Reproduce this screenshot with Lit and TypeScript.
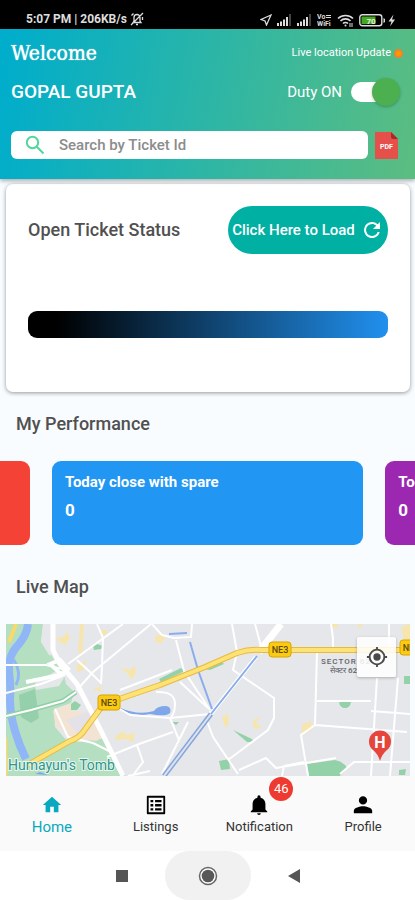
import { LitElement, html, css, svg } from "lit";
import { customElement, state } from "lit/decorators.js";
import { classMap } from "lit/directives/class-map.js";

/* Phone status bar: clock, network speed and system indicators. */
@customElement("status-bar")
class StatusBar extends LitElement {
  static styles = css`
    :host {
      display: flex;
      justify-content: space-between;
      align-items: flex-end;
      box-sizing: border-box;
      height: 29px;
      flex: none;
      padding: 0 18px 2px 26px;
      background: #000;
      color: #ddd;
      font-size: 12px;
      line-height: 16px;
      font-weight: 700;
    }
    .group {
      display: flex;
      align-items: center;
      gap: 3px;
    }
    .right {
      gap: 5px;
    }
    svg {
      display: block;
    }
  `;

  private signal() {
    return html`<svg width="15" height="12" viewBox="0 0 15 12" fill="#ddd">
      <path d="M0 9h2v3H0zM3 7.500h2V12H3zM6 5.500h2V12H6zM9 3h2v9H9z" />
      <path d="M12 0h2v12h-2z" fill="#444" />
    </svg>`;
  }

  render() {
    return html`
      <div class="group">
        <span>5:07 PM | 206KB/s</span>
        <svg width="14" height="14" viewBox="0 0 14 14" fill="none" stroke="#ddd" stroke-width="1.300">
          <path d="M3 10.500h8L10 9V5.500a3 3 0 0 0-6 0V9zM6 12.500h2M1 13L13 1M1.500 3.500l2-2M12.500 5v3" />
        </svg>
      </div>
      <div class="group right">
        <svg width="12" height="12" viewBox="0 0 12 12" fill="none" stroke="#ddd" stroke-width="1.300">
          <path d="M11 1L1 5.500l4 1.500 1.500 4z" />
        </svg>
        ${this.signal()} ${this.signal()}
        <svg width="15" height="14" viewBox="0 0 15 14" fill="#ddd" font-family="Roboto, sans-serif" font-weight="700" font-size="7">
          <text x="0" y="6">Vo</text>
          <text x="0" y="13">WiFi</text>
          <path d="M9 2h5v1H9zM9 4h5v1H9z" />
        </svg>
        <svg width="17" height="13" viewBox="0 0 17 13" fill="none" stroke="#ddd" stroke-width="1.600">
          <path d="M1 4.500a11 11 0 0 1 15 0M3.500 7a7 7 0 0 1 10 0M6 9.500a3.500 3.500 0 0 1 5 0" />
          <circle cx="8.500" cy="11.500" r="1" fill="#ddd" stroke="none" />
          <path d="M13 9v4M15 9v4" stroke-width="1" />
        </svg>
        <svg width="38" height="13" viewBox="0 0 38 13">
          <rect x="0.800" y="0.800" width="22" height="11" rx="2.500" fill="none" stroke="#ddd" stroke-width="1.400" />
          <rect x="2.500" y="2.500" width="14" height="7.600" fill="#46a81c" />
          <path d="M24.500 4v5l1.500-1V5z" fill="#ddd" />
          <text x="12" y="9.500" text-anchor="middle" font-family="Roboto, sans-serif" font-weight="700" font-size="8" fill="#eee">70</text>
          <path d="M34.500 0.500L29.500 7.500h3L31 12.500l5-7h-3z" fill="#ddd" />
        </svg>
      </div>
    `;
  }
}

/* Static street map with a locate button laid over it. */
@customElement("live-map")
class LiveMap extends LitElement {
  static styles = css`
    :host {
      display: block;
      position: relative;
      overflow: hidden;
      background: #e8eaed;
    }
    .canvas {
      display: block;
      width: 100%;
      height: 100%;
    }
    .locate {
      position: absolute;
      top: 13px;
      right: 14px;
      width: 39px;
      height: 40px;
      padding: 0;
      border: 0;
      border-radius: 2px;
      display: grid;
      place-items: center;
      background: rgba(255, 255, 255, 0.85);
      box-shadow: 0 1px 3px rgba(0, 0, 0, 0.25);
    }
  `;

  private shield(x: number, y: number) {
    return svg`
      <rect x=${x - 11} y=${y - 8} width="22" height="15" rx="3" fill="#fbcb14" stroke="#d9a400" stroke-width="1" />
      <text x=${x} y=${y + 3} text-anchor="middle" font-size="9" font-weight="500" fill="#5c4a10">NE3</text>`;
  }

  render() {
    return html`
      <svg class="canvas" viewBox="6 624 404 152" preserveAspectRatio="xMidYMid slice" font-family="Roboto, sans-serif" role="img" aria-label="Live map">
        <path d="M6 624H410V776H6z" fill="#e6e7eb" />
        <path d="M6 624H43L41 642 50 652 55 662 63 670 66 684 74 692 71 703 54 709 55 727 67 741 82 742 104 738 111 756 126 776H6z" fill="#b5dfc1" />
        <path d="M43 624h11l1 32-6-1-8-13zM35 683l21-12 8 7-5 8-23 4z" fill="#e6e7eb" />
        <path d="M53 711l18-8 4 8 15 2 14 24-8 4-24-4-16-11z" fill="#f3e3d3" />
        <path d="M66 720l22-8 8 12-17 12z" fill="#e4e2e8" />
        <path d="M19 695l16-6 4 29-8 5-10-6z" fill="#96cfab" />
        <path d="M71 704l4-3 6 4-4 5h-6zM93 646l4-2 6 2-2 3-7 1zM159 679l22-11 4 3-24 11zM172 722h7l-3 3zM205 669l17-7 2 2-14 6zM233 730l19 9 2 3-7 0zM339 702h12q-1 6-6 6-5 0-6-6zM307 764l28-4q9 2 12 8l-7 8h-31zM219 761l10-2 1 10-9 1zM404 676h6v8h-6zM399 770l7-1-1 6h-6z" fill="#93d1a8" />
        <path d="M56 638l8-1 3-6 3 7-4 5 3 3-10-4zM80 624h4l-2 30-4-2zM100 630h8l-2 5-6-1zM120 667l10 3 5-5 1 8-5 7-3-6zM77 665l10-5-4 10-6 2zM93 689l8-3v6zM155 637l6-3 4 4-4 6-6-3zM115 736l9-5 2 4 9-2-2 9-7-3-10 1zM222 717l6-3 1 10-4 4zM253 720l7-3-4 6 6 5-8 1zM303 724l8-3 1 9-6 3-5-1zM331 624h8l-4 5zM357 624h5l-2 5zM401 627l9-3v20l-6-4z" fill="#f6e6ae" />
        <path d="M28 624q-1 10-9 20-11 11-10 27 2 17 1 28 0 15 5 32 4 14 11 28" fill="none" stroke="#91b6f7" stroke-width="8" />
        <path d="M14 660q8 13 2 25" fill="none" stroke="#91b6f7" stroke-width="3" />
        <path d="M118 707q20 9 36 4 3-5 12-5 6 1 4 7-4 4-20 1-18 4-32-7M35 774l5-2 8 3z" fill="#7fa6ea" />

        <g fill="none" stroke="#fff" stroke-width="2" stroke-linejoin="round">
          <path d="M6 665H46l16 4M6 693l35-9 24-9M68 664l55-40M77 690l16-18 58-48" />
          <path d="M77 660l12 11 12 12M97 624l6 14-1 28-1 18M55 709l13 28 25 6 16 8" />
          <path d="M128 776l22-5M107 757l32-13 34-12M137 745l6 17-9 12M118 708l12 7 40 3 40-4 0-3M170 718l9 22M156 692q19-1 19 12 0 9-4 13" />
          <path d="M120 690l52-20M152 624l10 11 12 3 17-1 1-13M176 640l8 31 26 39M180 682l28 26M188 722l-26 52" />
          <path d="M232 624l5 28-4 18 41 28v20l-6 12-40 30M255 624l7 26M207 721l6 16 25 37" />
          <path d="M331 624l2 14v12M317 652l-2 73-14 10 7 41M317 701h54M315 725l92 7M371 711l39 3M377 678l-6 98M398 678l-8 98M389 624v26M239 770l27-12 10 10 60-10M282 776l2-10 20-4M340 774l14-12h56" />
        </g>
        <path d="M6 716l25-6 32-9 13-9" fill="none" stroke="#8fcfa5" stroke-width="5" />
        <path d="M6 716l25-6 32-9 13-9" fill="none" stroke="#fff" stroke-width="2" />
        <path d="M53 624v26l7 14 17 20 15 29 14 28 17 35" fill="none" stroke="#fff" stroke-width="5" />
        <path d="M26 682l39-8M50 664l10-4 8 9-7 5z" fill="none" stroke="#fff" stroke-width="4" />
        <path d="M281 624l-22 28" fill="none" stroke="#fff" stroke-width="7" />
        <path d="M256 657l-46 58-46 61" fill="none" stroke="#fff" stroke-width="4" />
        <path d="M257 656l-46 58M190 642l8 28 14 39M169 634l18-1" fill="none" stroke="#8badeb" stroke-width="2" />
        <path d="M211 714l-47 62" fill="none" stroke="#86a5dd" stroke-width="5" />
        <path d="M211 714l-47 62" fill="none" stroke="#dde3ea" stroke-width="2" />
        <path d="M16 624l-7 18" fill="none" stroke="#f8d969" stroke-width="4" />
        <path d="M6 738v38" fill="none" stroke="#f8d969" stroke-width="3" />
        <path d="M26 766l44-25q10-3 16-13l17-23 22-8 35-12 45-18 32-14q12-4 24-3H410" fill="none" stroke="#e9b93e" stroke-width="6" stroke-linejoin="round" />
        <path d="M26 766l44-25q10-3 16-13l17-23 22-8 35-12 45-18 32-14q12-4 24-3H410" fill="none" stroke="#fde276" stroke-width="4" stroke-linejoin="round" />

        ${this.shield(109, 703)} ${this.shield(280, 650)} ${this.shield(411, 648)}
        <g fill="#5f6368" font-size="8" font-weight="500">
          <text x="321" y="664" letter-spacing="1">SECTOR 62</text>
          <text x="330" y="673">सेक्टर 62</text>
        </g>
        <text x="8" y="770" font-size="14" fill="#2b968c" stroke="#eaf6ee" stroke-width="2" paint-order="stroke">Humayun's Tomb</text>
        <path d="M380 761q-2-7-7-11a11 11 0 1 1 14 0q-5 4-7 11z" fill="#e5453b" />
        <text x="380" y="748" text-anchor="middle" font-size="16" font-weight="700" fill="#fff">H</text>
      </svg>
      <button class="locate" aria-label="My location">
        <svg width="22" height="22" viewBox="0 0 24 24" fill="#4a4a4a">
          <path d="M12 8a4 4 0 1 0 0 8 4 4 0 0 0 0-8zm8.940 3A8.990 8.990 0 0 0 13 3.060V1h-2v2.060A8.990 8.990 0 0 0 3.060 11H1v2h2.060A8.990 8.990 0 0 0 11 20.940V23h2v-2.060A8.990 8.990 0 0 0 20.940 13H23v-2h-2.060zM12 19a7 7 0 1 1 0-14 7 7 0 0 1 0 14z" />
        </svg>
      </button>
    `;
  }
}

const TABS = [
  { label: "Home", icon: svg`<path d="M10 20v-6h4v6h5v-8h3L12 3 2 12h3v8z" />` },
  {
    label: "Listings",
    icon: svg`<path d="M21 2H3a1 1 0 0 0-1 1v18a1 1 0 0 0 1 1h18a1 1 0 0 0 1-1V3a1 1 0 0 0-1-1zm-1 18H4V4h16zM6 6.500h3v2.500H6zm5 0h7v2.500h-7zM6 11h3v2.500H6zm5 0h7v2.500h-7zM6 15.500h3V18H6zm5 0h7V18h-7z" />`,
  },
  {
    label: "Notification",
    badge: "46",
    icon: svg`<path d="M12 23a2 2 0 0 0 2-2h-4a2 2 0 0 0 2 2zm7-6v-6c0-3.400-2-6.100-5.300-6.900V3a1.700 1.700 0 0 0-3.400 0v1.100C7 4.900 5 7.600 5 11v6l-2 2v1h18v-1z" />`,
  },
  {
    label: "Profile",
    icon: svg`<path d="M12 11.500a4.500 4.500 0 1 0 0-9 4.500 4.500 0 0 0 0 9zm0 1.800c-3.500 0-10 1.700-10 5V21h20v-2.700c0-3.300-6.500-5-10-5z" />`,
  },
];

/* Bottom tabs of the app. */
@customElement("tab-bar")
class TabBar extends LitElement {
  @state() private active = "Home";

  static styles = css`
    :host {
      display: block;
      flex: none;
      background: #fafafa;
    }
    .tabs {
      display: grid;
      grid-template-columns: repeat(4, 1fr);
      height: 75px;
    }
    .tab {
      display: flex;
      flex-direction: column;
      align-items: center;
      gap: 3px;
      padding: 18px 0 0;
      border: 0;
      background: none;
      font: 400 13px/16px Roboto, sans-serif;
      color: #333;
    }
    .tab.active {
      color: #0aa9c0;
      font-size: 15px;
    }
    .icon {
      position: relative;
      width: 22px;
      height: 22px;
      color: #000;
    }
    .active .icon {
      color: inherit;
    }
    .icon svg {
      display: block;
    }
    .badge {
      position: absolute;
      left: 21px;
      top: -17px;
      width: 24px;
      height: 24px;
      border-radius: 50%;
      background: #ee3a30;
      color: #fff;
      font-size: 13px;
      line-height: 24px;
    }
  `;

  render() {
    return html`<nav class="tabs">
      ${TABS.map(
        (t) => html`<button
          class=${classMap({ tab: true, active: t.label === this.active })}
          @click=${() => (this.active = t.label)}
        >
          <span class="icon">
            <svg width="22" height="22" viewBox="0 0 24 24" fill="currentColor">${t.icon}</svg>
            ${t.badge ? html`<span class="badge">${t.badge}</span>` : ""}
          </span>
          <span>${t.label}</span>
        </button>`
      )}
    </nav>`;
  }
}

/* Recents, home and back keys of the phone. */
@customElement("system-keys")
class SystemKeys extends LitElement {
  static styles = css`
    :host {
      display: flex;
      flex: none;
      justify-content: center;
      height: 49px;
      background: #fff;
    }
    button {
      display: grid;
      place-items: center;
      width: 86px;
      padding: 0;
      border: 0;
      border-radius: 25px;
      background: none;
    }
    .home {
      background: #f1f1f1;
    }
  `;

  render() {
    return html`
      <button aria-label="Recent apps">
        <svg width="14" height="14" viewBox="0 0 14 14"><path d="M1 1h12v12H1z" fill="#555" /></svg>
      </button>
      <button class="home" aria-label="Home screen">
        <svg width="20" height="20" viewBox="0 0 20 20">
          <circle cx="10" cy="10" r="8.500" fill="#fff" stroke="#666" stroke-width="1.500" />
          <circle cx="10" cy="10" r="6.300" fill="#585858" />
        </svg>
      </button>
      <button aria-label="Back">
        <svg width="14" height="16" viewBox="0 0 14 16"><path d="M13 1v14L1 8z" fill="#555" /></svg>
      </button>
    `;
  }
}

const CARDS = [
  { tone: "red", title: "Today close", value: 0 },
  { tone: "blue", title: "Today close with spare", value: 0 },
  { tone: "purple", title: "Today close without spare", value: 0 },
];

@customElement("app-root")
class AppRoot extends LitElement {
  static styles = css`
    :host {
      display: flex;
      flex-direction: column;
      height: 100vh;
      background: #f8fcff;
      color: #505050;
      font-family: Roboto, sans-serif;
    }
    header {
      position: relative;
      flex: none;
      display: flex;
      flex-direction: column;
      box-sizing: border-box;
      height: 150px;
      padding: 12px 12px 20px 11px;
      background: linear-gradient(100deg, #00adcb 2%, #2ab5a8 48%, #5cbd80 100%);
      box-shadow: 0 2px 4px rgba(0, 0, 0, 0.3);
      color: #fff;
    }
    .row {
      display: flex;
      align-items: center;
      justify-content: space-between;
    }
    .welcome {
      font: 400 21px/24px "DejaVu Serif Condensed", "DejaVu Serif", serif;
      font-stretch: condensed;
      text-shadow: 0 0 1px #fff;
    }
    .live {
      display: flex;
      align-items: center;
      gap: 3px;
      font-size: 11px;
      line-height: 16px;
    }
    .dot {
      width: 5px;
      height: 5px;
      border: 2px solid #f0842a;
      border-radius: 50%;
      background: #ff9800;
    }
    .name {
      margin: 0;
      font-size: 19px;
      line-height: 24px;
      font-weight: 500;
    }
    .account {
      height: 28px;
      margin-top: 13px;
      padding-right: 3px;
    }
    .duty {
      display: flex;
      align-items: center;
      gap: 9px;
      font-size: 15px;
      line-height: 20px;
    }
    .switch {
      position: relative;
      appearance: none;
      width: 49px;
      height: 20px;
      margin: 0;
      border-radius: 10px;
      background: linear-gradient(#fff, #fff) left / 40px 100% no-repeat;
    }
    .switch::before {
      content: "";
      position: absolute;
      left: 0;
      top: -4px;
      width: 28px;
      height: 28px;
      border-radius: 50%;
      background: #bbb;
      box-shadow: 0 1px 3px rgba(0, 0, 0, 0.25);
    }
    .switch:checked::before {
      left: 21px;
      background: #4caf50;
    }
    .find {
      gap: 7px;
      margin-top: 25px;
      padding-right: 5px;
    }
    .search {
      flex: 1;
      display: flex;
      align-items: center;
      gap: 14px;
      height: 28px;
      padding-left: 14px;
      border-radius: 6px;
      background: #fff;
    }
    .search input {
      flex: 1;
      min-width: 0;
      padding: 0;
      border: 0;
      outline: 0;
      background: none;
      font: 500 15px/20px Roboto, sans-serif;
      color: #555;
    }
    .search input::placeholder {
      color: #8c8c8c;
      opacity: 1;
    }
    .pdf {
      padding: 0;
      border: 0;
      background: none;
    }
    svg {
      display: block;
    }
    main {
      flex: 1;
      min-height: 0;
      display: flex;
      flex-direction: column;
      overflow: hidden;
    }
    .status {
      flex: none;
      display: flex;
      flex-direction: column;
      gap: 57px;
      box-sizing: border-box;
      margin: 5px 5px 0 6px;
      padding: 22px 22px 54px;
      border-radius: 7px;
      background: #fff;
      box-shadow: 0 1px 4px rgba(0, 0, 0, 0.4);
    }
    h2 {
      margin: 0;
      font-size: 18px;
      line-height: 24px;
      font-weight: 500;
    }
    .load {
      display: flex;
      align-items: center;
      justify-content: center;
      gap: 5px;
      height: 48px;
      width: 160px;
      padding: 0;
      border: 0;
      border-radius: 24px;
      background: #00b0a2;
      color: #fff;
      font: 500 15px/20px Roboto, sans-serif;
      white-space: nowrap;
    }
    .bar {
      height: 27px;
      border-radius: 9px;
      background: linear-gradient(to right, #000 8%, #2190ee 100%);
    }
    .heading {
      flex: none;
      margin: 20px 16px 25px;
    }
    .cards {
      flex: none;
      display: flex;
      justify-content: center;
      gap: 22px;
      overflow: hidden;
    }
    .card {
      flex: 0 0 75%;
      box-sizing: border-box;
      height: 84px;
      padding: 11px 13px;
      border-radius: 9px;
      color: #fff;
      font-weight: 700;
      font-size: 15px;
      line-height: 20px;
    }
    .value {
      margin-top: 8px;
      font-size: 17px;
    }
    .red {
      background: #f44336;
    }
    .blue {
      background: #2196f3;
    }
    .purple {
      background: #9c27b0;
    }
    .map-heading {
      flex: none;
      margin: 30px 16px 25px;
    }
    live-map {
      flex: 1;
      min-height: 0;
      margin: 0 5px 0 6px;
    }
  `;

  render() {
    return html`
      <status-bar></status-bar>
      <header>
        <div class="row">
          <span class="welcome">Welcome</span>
          <span class="live">Live location Update <span class="dot"></span></span>
        </div>
        <div class="row account">
          <h1 class="name">GOPAL GUPTA</h1>
          <label class="duty">Duty ON <input class="switch" type="checkbox" role="switch" checked /></label>
        </div>
        <div class="row find">
          <label class="search">
            <svg width="20" height="20" viewBox="0 0 20 20" fill="none" stroke="#52d69c" stroke-width="2">
              <circle cx="7.500" cy="7.500" r="5.700" />
              <path d="M11.800 11.800L18.500 18.500" />
            </svg>
            <input type="text" placeholder="Search by Ticket Id" aria-label="Search by Ticket Id" />
          </label>
          <button class="pdf" aria-label="Export as PDF">
            <svg width="23" height="27" viewBox="0 0 23 27">
              <path d="M0 0h16l7 7v20H0z" fill="#e5504a" />
              <path d="M16 0l7 7h-5q-2 0-2-2z" fill="#a82a28" />
              <text x="11.500" y="16.500" text-anchor="middle" font-family="Roboto, sans-serif" font-size="7" font-weight="700" fill="#fff">PDF</text>
            </svg>
          </button>
        </div>
      </header>
      <main>
        <section class="status">
          <div class="row">
            <h2>Open Ticket Status</h2>
            <button class="load">
              Click Here to Load
              <svg width="24" height="24" viewBox="0 0 24 24" fill="#fff">
                <path d="M17.650 6.350A7.960 7.960 0 0 0 12 4a8 8 0 1 0 7.730 10h-2.080A6 6 0 1 1 12 6c1.660 0 3.140.690 4.220 1.780L13 11h7V4z" />
              </svg>
            </button>
          </div>
          <div class="bar"></div>
        </section>
        <h2 class="heading">My Performance</h2>
        <section class="cards">
          ${CARDS.map(
            (c) => html`<article class="card ${c.tone}">
              <div>${c.title}</div>
              <div class="value">${c.value}</div>
            </article>`
          )}
        </section>
        <h2 class="map-heading">Live Map</h2>
        <live-map></live-map>
      </main>
      <tab-bar></tab-bar>
      <system-keys></system-keys>
    `;
  }
}
